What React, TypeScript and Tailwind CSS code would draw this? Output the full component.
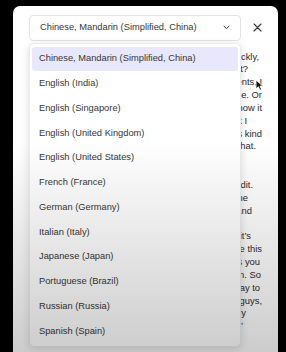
const LANGUAGES = [
  'Chinese, Mandarin (Simplified, China)',
  'English (India)',
  'English (Singapore)',
  'English (United Kingdom)',
  'English (United States)',
  'French (France)',
  'German (Germany)',
  'Italian (Italy)',
  'Japanese (Japan)',
  'Portuguese (Brazil)',
  'Russian (Russia)',
  'Spanish (Spain)',
];

// transcript lines sitting behind the open list; pr keeps the ragged right edge
const LINES: { text: string; pr: string; gap?: string }[] = [
  { text: 'let me just go through this really quickly,', pr: 'pr-[3px]' },
  { text: 'what do you guys think about it?', pr: 'pr-[14px]' },
  { text: 'I have a couple of small comments, I', pr: 'pr-0' },
  { text: 'think it is basically in place. Or', pr: 'pr-0' },
  { text: 'at least it will be, I mean, I know it', pr: 'pr-0' },
  { text: 'still needs some more work, but I', pr: 'pr-[15px]' },
  { text: 'think we should keep this kind', pr: 'pr-0' },
  { text: 'of approach and see how it goes with that.', pr: 'pr-[6px]' },
  { text: 'Then you click on the button to Edit.', pr: 'pr-[9px]', gap: 'mt-[25.7px]' },
  { text: 'you will be able to change some of the', pr: 'pr-[14px]' },
  { text: 'words in there if it is wrong and', pr: 'pr-[10px]' },
  { text: 'So the main thing I want to say is that it\u2019s', pr: 'pr-[11px]', gap: 'mt-[12.85px]' },
  { text: 'really important that we get to use this', pr: 'pr-0' },
  { text: 'kind of workflow, because it helps you', pr: 'pr-[2px]' },
  { text: 'save a lot of time in the long run. So', pr: 'pr-[1px]' },
  { text: 'that is all I really wanted to say to', pr: 'pr-[2px]' },
  { text: 'everyone on the team. Thank you, guys,', pr: 'pr-0' },
  { text: 'and I will talk to you all again very', pr: 'pr-[16px]' },
  { text: 'soon, bye.\u2019', pr: 'pr-[19px]' },
];

function Chevron() {
  return (
    <svg width="7" height="5" viewBox="0 0 7 5" fill="none" aria-hidden>
      <path d="M1 1.2L3.5 3.6L6 1.2" stroke="#3a3a3a" strokeWidth="1" strokeLinecap="round" strokeLinejoin="round" />
    </svg>
  );
}

function CloseIcon() {
  return (
    <svg width="9" height="9" viewBox="0 0 9 9" fill="none" aria-hidden>
      <path d="M1 1L8 8M8 1L1 8" stroke="#333" strokeWidth="1.1" strokeLinecap="round" />
    </svg>
  );
}

function Cursor() {
  return (
    <svg width="9" height="12" viewBox="0 0 9 12" aria-hidden>
      <path d="M1 1V10L3.3 7.8L5 11.2L6.6 10.4L5 7.2H8L1 1Z" fill="#111" stroke="#fff" strokeWidth="0.9" strokeLinejoin="round" />
    </svg>
  );
}

export default function App() {
  return (
    <div className="relative h-[352px] w-[286px] overflow-hidden bg-black pl-[13px] pt-[6px] font-['Liberation_Sans',Arial,sans-serif]">
      <div className="relative h-[360px] w-[265px] rounded-[7px] bg-white px-[16px] pt-[9px]">
        <div className="flex h-[25.5px] items-center">
          <div className="flex h-full w-[212px] items-center justify-between rounded-[4px] border border-[#e3e3e3] bg-white pl-[10px] pr-[10px]">
            <span className="text-[9.3px] text-[#363636]">Chinese, Mandarin (Simplified, China)</span>
            <Chevron />
          </div>
          <div className="ml-[11.5px] flex items-center">
            <CloseIcon />
          </div>
        </div>

        <div className="mt-[10px] w-[233px] text-[9.4px] leading-[12.85px] text-[#2a2a2a]">
          {LINES.map((line, i) => (
            <div key={i} className={`flex h-[12.85px] justify-end whitespace-nowrap ${line.pr} ${line.gap ?? ''}`}>
              {line.text}
            </div>
          ))}
        </div>

        <div className="absolute left-[16px] top-[36.7px] w-[212px] rounded-[5px] border border-[#ececec] bg-white px-[2px] pb-[2px] pt-[3px] shadow-[0_2px_8px_rgba(0,0,0,0.14)]">
          {LANGUAGES.map((lang, i) => (
            <div
              key={lang}
              className={`flex h-[24.8px] items-center rounded-[3px] pl-[7px] text-[9.3px] text-[#363636] ${i === 0 ? 'bg-[#e9e7fb]' : ''}`}
            >
              {lang}
            </div>
          ))}
        </div>

        <div className="absolute left-[242px] top-[73px]">
          <Cursor />
        </div>
      </div>

      <div className="pointer-events-none absolute inset-0 bg-linear-to-b from-transparent from-40% to-black/20" />
    </div>
  );
}
